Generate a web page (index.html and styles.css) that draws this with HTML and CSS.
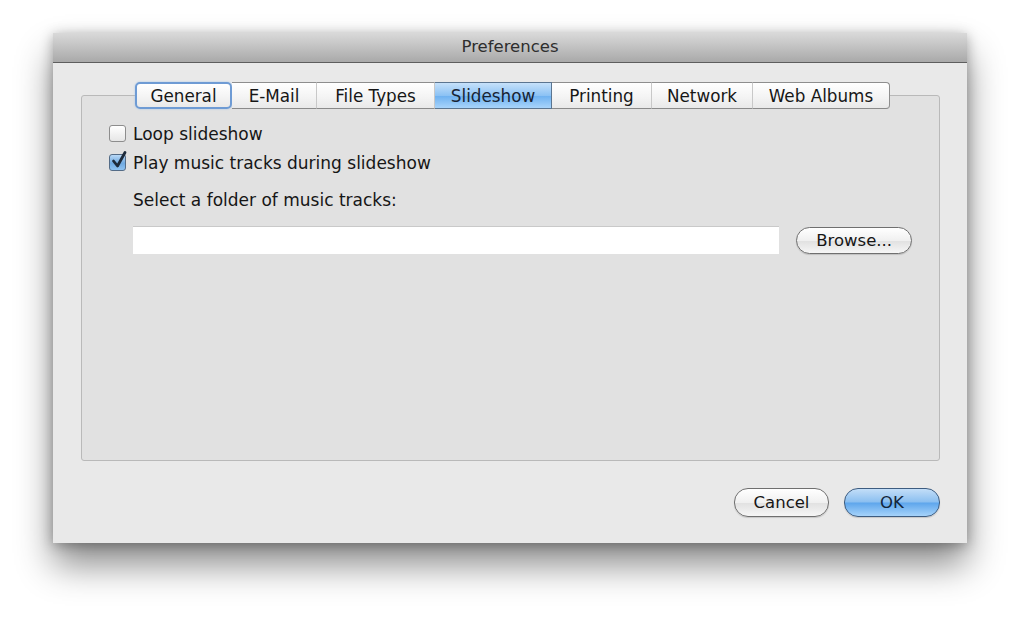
FILE: index.html
```html
<!DOCTYPE html>
<html lang="en">
<head>
  <meta charset="UTF-8">
  <title>Preferences</title>
  <link rel="stylesheet" href="styles.css">
</head>
<body>
<div class="window">
  <div class="titlebar">Preferences</div>

  <div class="content">
    <div class="tabs">
      <a href="javascript:" class="tab tab-first focused">General</a>
      <a href="javascript:" class="tab">E-Mail</a>
      <a href="javascript:" class="tab">File Types</a>
      <a href="javascript:" class="tab selected">Slideshow</a>
      <a href="javascript:" class="tab">Printing</a>
      <a href="javascript:" class="tab">Network</a>
      <a href="javascript:" class="tab tab-last">Web Albums</a>
    </div>

    <div class="group">
      <label class="check-row">
        <span class="checkbox"></span>
        Loop slideshow
      </label>
      <label class="check-row">
        <span class="checkbox checked">
          <svg class="tick" viewBox="0 0 18 20" width="18" height="20"><path d="M3.5 11 L7.5 16 L15 2.5" fill="none" stroke="#1d2a3a" stroke-width="2.8" stroke-linecap="round" stroke-linejoin="round"/></svg>
        </span>
        Play music tracks during slideshow
      </label>

      <div class="field-label">Select a folder of music tracks:</div>
      <div class="field-row">
        <div class="text-field"></div>
        <a href="javascript:" class="button browse">Browse...</a>
      </div>
    </div>

    <div class="actions">
      <a href="javascript:" class="button cancel">Cancel</a>
      <a href="javascript:" class="button ok">OK</a>
    </div>
  </div>
</div>
</body>
</html>
```

FILE: styles.css
```css
* {
  margin: 0;
  padding: 0;
  box-sizing: border-box;
}

html, body {
  height: 100%;
}

body {
  padding: 33px 0 0 53px;

  font-family: "DejaVu Sans", "Liberation Sans", sans-serif;
  font-size: 16.5px;
  color: #161616;
  background-color: #ffffff;
}

a {
  color: inherit;
  text-decoration: none;
}

.window {
  width: 914px;
  height: 510px;

  background-color: #e9e9e9;
  box-shadow: 0 22px 34px rgba(0, 0, 0, 0.45), 0 2px 12px rgba(0, 0, 0, 0.3);
}

.titlebar {
  height: 30px;
  padding-top: 4px;

  text-align: center;
  font-size: 16.5px;
  color: #2e2e2e;
  background: linear-gradient(#d9d9d9, #a9a9a9);
  border-bottom: 1px solid #5e5e5e;
}

.content {
  padding: 19px 27px 0 28px;
}

.tabs {
  display: flex;
  justify-content: center;
  position: relative;
  z-index: 1;
  padding-left: 4px;
}

.tab {
  display: flex;
  align-items: center;
  justify-content: center;
  height: 27px;
  padding: 0 8px;

  font-size: 16.8px;
  background: linear-gradient(#ffffff, #f4f4f4 55%, #e9e9e9);
  border-top: 1px solid #8e8e8e;
  border-bottom: 1px solid #8a8a8a;
  border-right: 1px solid #c8c8c8;
}

.tab-first {
  border-left: 1px solid #8e8e8e;
  border-radius: 4px 0 0 4px;
}

.tab-last {
  border-right: 1px solid #8e8e8e;
  border-radius: 0 4px 4px 0;
}

.tab.focused {
  width: 97px;
  border: 2px solid #6e9bd4;
  border-radius: 5px;
  box-shadow: 0 0 2px #9cc0ea;
}

.tab.selected {
  color: #172333;
  background: linear-gradient(#c6e1fa, #8cc2f4 50%, #6eb1f0 52%, #a8d4fb);
  border-top-color: #5b7590;
  border-bottom-color: #5b7590;
  border-right-color: #5b7590;
}

.tabs .tab:nth-child(2) { width: 85px; }
.tabs .tab:nth-child(3) { width: 118px; }
.tabs .tab:nth-child(4) { width: 117px; }
.tabs .tab:nth-child(5) { width: 100px; }
.tabs .tab:nth-child(6) { width: 101px; }
.tabs .tab:nth-child(7) { width: 137px; }

.group {
  height: 366px;
  margin-top: -14px;
  padding: 29px 27px 0 27px;

  background-color: #e1e1e1;
  border: 1px solid #b9b9b9;
  border-radius: 3px;
}

.check-row {
  display: flex;
  align-items: center;
  gap: 7px;
  height: 17px;
  margin-bottom: 12px;

  font-size: 17px;
}

.checkbox {
  position: relative;
  flex-shrink: 0;
  width: 17px;
  height: 17px;

  background: linear-gradient(#ffffff, #e6e6e6);
  border: 1px solid #8d8d8d;
  border-radius: 3px;
}

.checkbox.checked {
  background: linear-gradient(#b9d9f7, #6fa9e0 55%, #8ec2f1);
  border-color: #546c87;
}

.tick {
  position: absolute;
  left: 0;
  top: -5px;
}

.field-label {
  margin: 19px 0 0 24px;

  font-size: 17px;
}

.field-row {
  display: flex;
  align-items: center;
  margin: 16px 0 0 24px;
}

.text-field {
  width: 648px;
  height: 28px;

  background-color: #ffffff;
  border-top: 1px solid #c9c9c9;
}

.button {
  display: flex;
  align-items: center;
  justify-content: center;
  height: 27px;

  font-size: 16.5px;
  background: linear-gradient(#ffffff, #f0f0f0 50%, #e1e1e1 52%, #f6f6f6);
  border: 1px solid #6f6f6f;
  border-radius: 14px;
  box-shadow: 0 1px 1px rgba(0, 0, 0, 0.15);
}

.browse {
  width: 116px;
  margin-left: 17px;
}

.actions {
  display: flex;
  justify-content: flex-end;
  gap: 15px;
  margin-top: 27px;
}

.cancel {
  width: 95px;
  height: 29px;
}

.ok {
  width: 96px;
  height: 29px;

  color: #12253a;
  background: linear-gradient(#c3def8, #8bbff0 48%, #5ea6ec 52%, #a6d3fa);
  border-color: #3d5c80;
}
```
